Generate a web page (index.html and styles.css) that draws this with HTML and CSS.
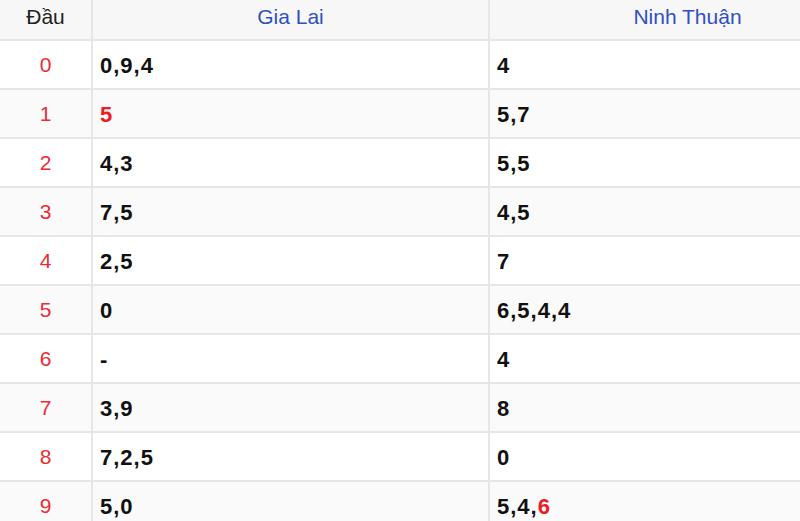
FILE: index.html
```html
<!DOCTYPE html>
<html lang="vi">
<head>
<meta charset="utf-8">
<title>Lô tô đầu</title>
<link rel="stylesheet" href="styles.css">
</head>
<body>
<div class="frame">
<table class="loto">
  <colgroup>
    <col class="c-head">
    <col class="c-prov">
    <col class="c-prov">
  </colgroup>
  <thead>
    <tr>
      <th class="th-dau">Đầu</th>
      <th class="th-prov">Gia Lai</th>
      <th class="th-prov">Ninh Thuận</th>
    </tr>
  </thead>
  <tbody>
    <tr><td class="dau">0</td><td class="val">0,9,4</td><td class="val">4</td></tr>
    <tr><td class="dau">1</td><td class="val"><span class="hot">5</span></td><td class="val">5,7</td></tr>
    <tr><td class="dau">2</td><td class="val">4,3</td><td class="val">5,5</td></tr>
    <tr><td class="dau">3</td><td class="val">7,5</td><td class="val">4,5</td></tr>
    <tr><td class="dau">4</td><td class="val">2,5</td><td class="val">7</td></tr>
    <tr><td class="dau">5</td><td class="val">0</td><td class="val">6,5,4,4</td></tr>
    <tr><td class="dau">6</td><td class="val">-</td><td class="val">4</td></tr>
    <tr><td class="dau">7</td><td class="val">3,9</td><td class="val">8</td></tr>
    <tr><td class="dau">8</td><td class="val">7,2,5</td><td class="val">0</td></tr>
    <tr><td class="dau">9</td><td class="val">5,0</td><td class="val">5,4,<span class="hot">6</span></td></tr>
  </tbody>
</table>
</div>
</body>
</html>
```
FILE: styles.css
```css
html, body {
  margin: 0;
  padding: 0;
  background: #ffffff;
}

body {
  font-family: "Liberation Sans", Arial, sans-serif;
}

.frame {
  width: 800px;
  height: 521px;
  overflow: hidden;
}

.loto {
  border-collapse: collapse;
  table-layout: fixed;
  width: 887px;
}

.c-head { width: 92px; }
.c-prov { width: 397px; }

.loto th,
.loto td {
  border-right: 2px solid #e6e6e6;
  border-bottom: 2px solid #e6e6e6;
  padding: 0;
  vertical-align: middle;
}

.loto thead tr {
  height: 40px;
  background: #f7f7f7;
}

.loto th {
  font-weight: normal;
  font-size: 21px;
  text-align: center;
  padding-bottom: 5px;
}

.th-dau { color: #222222; }
.th-prov { color: #2f4fc4; }

.loto tbody tr { height: 49px; }
.loto tbody tr:nth-child(even) { background: #fafafa; }

.loto .dau {
  text-align: center;
  color: #ec2b33;
  font-size: 21px;
}

.loto .val {
  padding: 2px 0 0 7px;
  font-weight: bold;
  font-size: 22px;
  letter-spacing: 1px;
  color: #111111;
}

.hot { color: #ec1c24; }
```
